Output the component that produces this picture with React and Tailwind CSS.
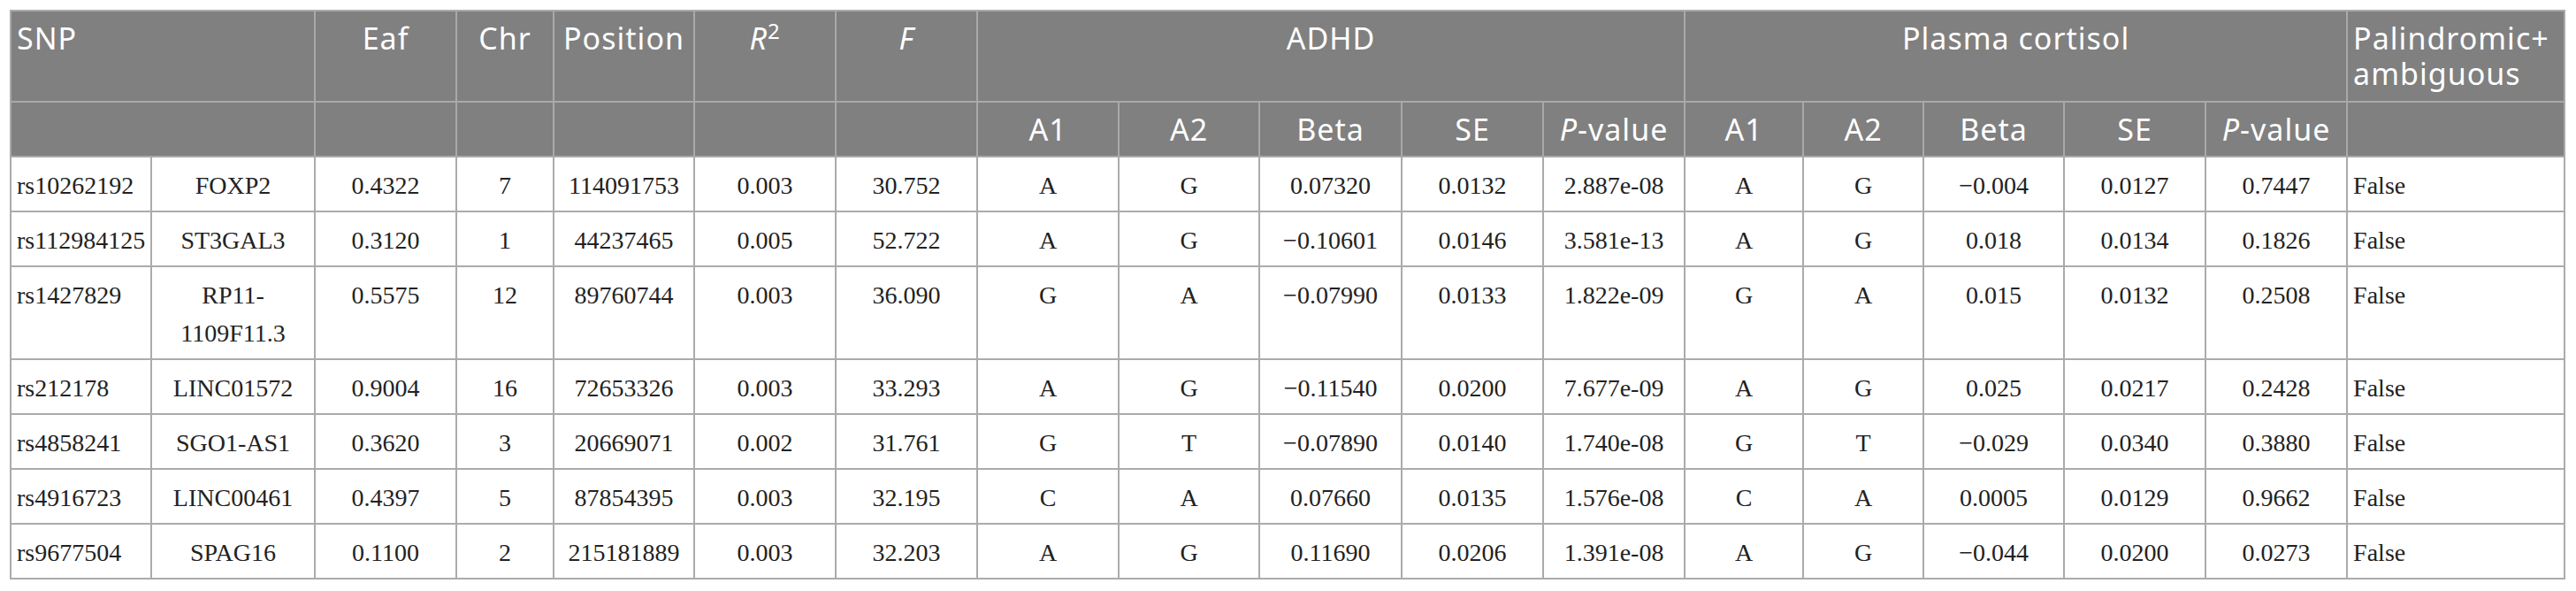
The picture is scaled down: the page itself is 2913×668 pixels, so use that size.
const COLS = [159, 185, 160, 110, 159, 160, 160, 160, 159, 161, 160, 160, 134, 136, 159, 160, 160, 246];

const ROWS = [
  ["rs10262192", "FOXP2", "0.4322", "7", "114091753", "0.003", "30.752", "A", "G", "0.07320", "0.0132", "2.887e-08", "A", "G", "\u22120.004", "0.0127", "0.7447", "False"],
  ["rs112984125", "ST3GAL3", "0.3120", "1", "44237465", "0.005", "52.722", "A", "G", "\u22120.10601", "0.0146", "3.581e-13", "A", "G", "0.018", "0.0134", "0.1826", "False"],
  ["rs1427829", "RP11-|1109F11.3", "0.5575", "12", "89760744", "0.003", "36.090", "G", "A", "\u22120.07990", "0.0133", "1.822e-09", "G", "A", "0.015", "0.0132", "0.2508", "False"],
  ["rs212178", "LINC01572", "0.9004", "16", "72653326", "0.003", "33.293", "A", "G", "\u22120.11540", "0.0200", "7.677e-09", "A", "G", "0.025", "0.0217", "0.2428", "False"],
  ["rs4858241", "SGO1-AS1", "0.3620", "3", "20669071", "0.002", "31.761", "G", "T", "\u22120.07890", "0.0140", "1.740e-08", "G", "T", "\u22120.029", "0.0340", "0.3880", "False"],
  ["rs4916723", "LINC00461", "0.4397", "5", "87854395", "0.003", "32.195", "C", "A", "0.07660", "0.0135", "1.576e-08", "C", "A", "0.0005", "0.0129", "0.9662", "False"],
  ["rs9677504", "SPAG16", "0.1100", "2", "215181889", "0.003", "32.203", "A", "G", "0.11690", "0.0206", "1.391e-08", "A", "G", "\u22120.044", "0.0200", "0.0273", "False"],
];

const th = "border-2 border-[#a9a9a9] bg-[#808080] text-white font-normal align-top px-[6px] pt-[10px] leading-[40px]";
const td = "border-2 border-[#ababab] align-top px-[6px] pt-[10px] pb-[7px] leading-[43px]";

function PValue() {
  return (
    <>
      <i>P</i>-value
    </>
  );
}

function Cell({ value, i }) {
  // first column left, last column left, the rest centred
  const align = i === 0 || i === 17 ? "text-left" : "text-center";
  const parts = value.split("|");
  return (
    <td className={`${td} ${align}`}>
      {parts.map((p, k) => (
        <span key={k}>
          {k > 0 && <br />}
          {p}
        </span>
      ))}
    </td>
  );
}

export default function App() {
  const sub = ["A1", "A2", "Beta", "SE", "P"];
  return (
    <div className="bg-white p-[11px] w-[2913px] h-[668px]">
      <table
        className="table-fixed border-collapse w-[2890px] text-[#222] text-[28px]"
        style={{ fontFamily: '"Liberation Serif", "Times New Roman", serif' }}
      >
        <colgroup>
          {COLS.map((w, i) => (
            <col key={i} style={{ width: w }} />
          ))}
        </colgroup>
        <thead className="text-[34px] tracking-[0.03em] font-['Noto_Sans',sans-serif]">
          <tr>
            <th colSpan={2} className={`${th} pb-[11px] text-left`}>SNP</th>
            <th className={`${th} pb-[11px] text-center`}>Eaf</th>
            <th className={`${th} pb-[11px] text-center`}>Chr</th>
            <th className={`${th} pb-[11px] text-center`}>Position</th>
            <th className={`${th} pb-[11px] text-center`}>
              <i>R</i>
              <sup className="not-italic text-[24px]">2</sup>
            </th>
            <th className={`${th} pb-[11px] text-center`}>
              <i>F</i>
            </th>
            <th colSpan={5} className={`${th} pb-[11px] text-center`}>ADHD</th>
            <th colSpan={5} className={`${th} pb-[11px] text-center`}>Plasma cortisol</th>
            <th className={`${th} pb-[11px] text-left`}>
              Palindromic+
              <br />
              ambiguous
            </th>
          </tr>
          <tr>
            <th colSpan={2} className={`${th} pb-[10px]`}></th>
            <th className={`${th} pb-[10px]`}></th>
            <th className={`${th} pb-[10px]`}></th>
            <th className={`${th} pb-[10px]`}></th>
            <th className={`${th} pb-[10px]`}></th>
            <th className={`${th} pb-[10px]`}></th>
            {[...sub, ...sub].map((s, i) => (
              <th key={i} className={`${th} pb-[10px] text-center`}>
                {s === "P" ? <PValue /> : s}
              </th>
            ))}
            <th className={`${th} pb-[10px]`}></th>
          </tr>
        </thead>
        <tbody>
          {ROWS.map((r, ri) => (
            <tr key={ri}>
              {r.map((v, i) => (
                <Cell key={i} value={v} i={i} />
              ))}
            </tr>
          ))}
        </tbody>
      </table>
    </div>
  );
}
